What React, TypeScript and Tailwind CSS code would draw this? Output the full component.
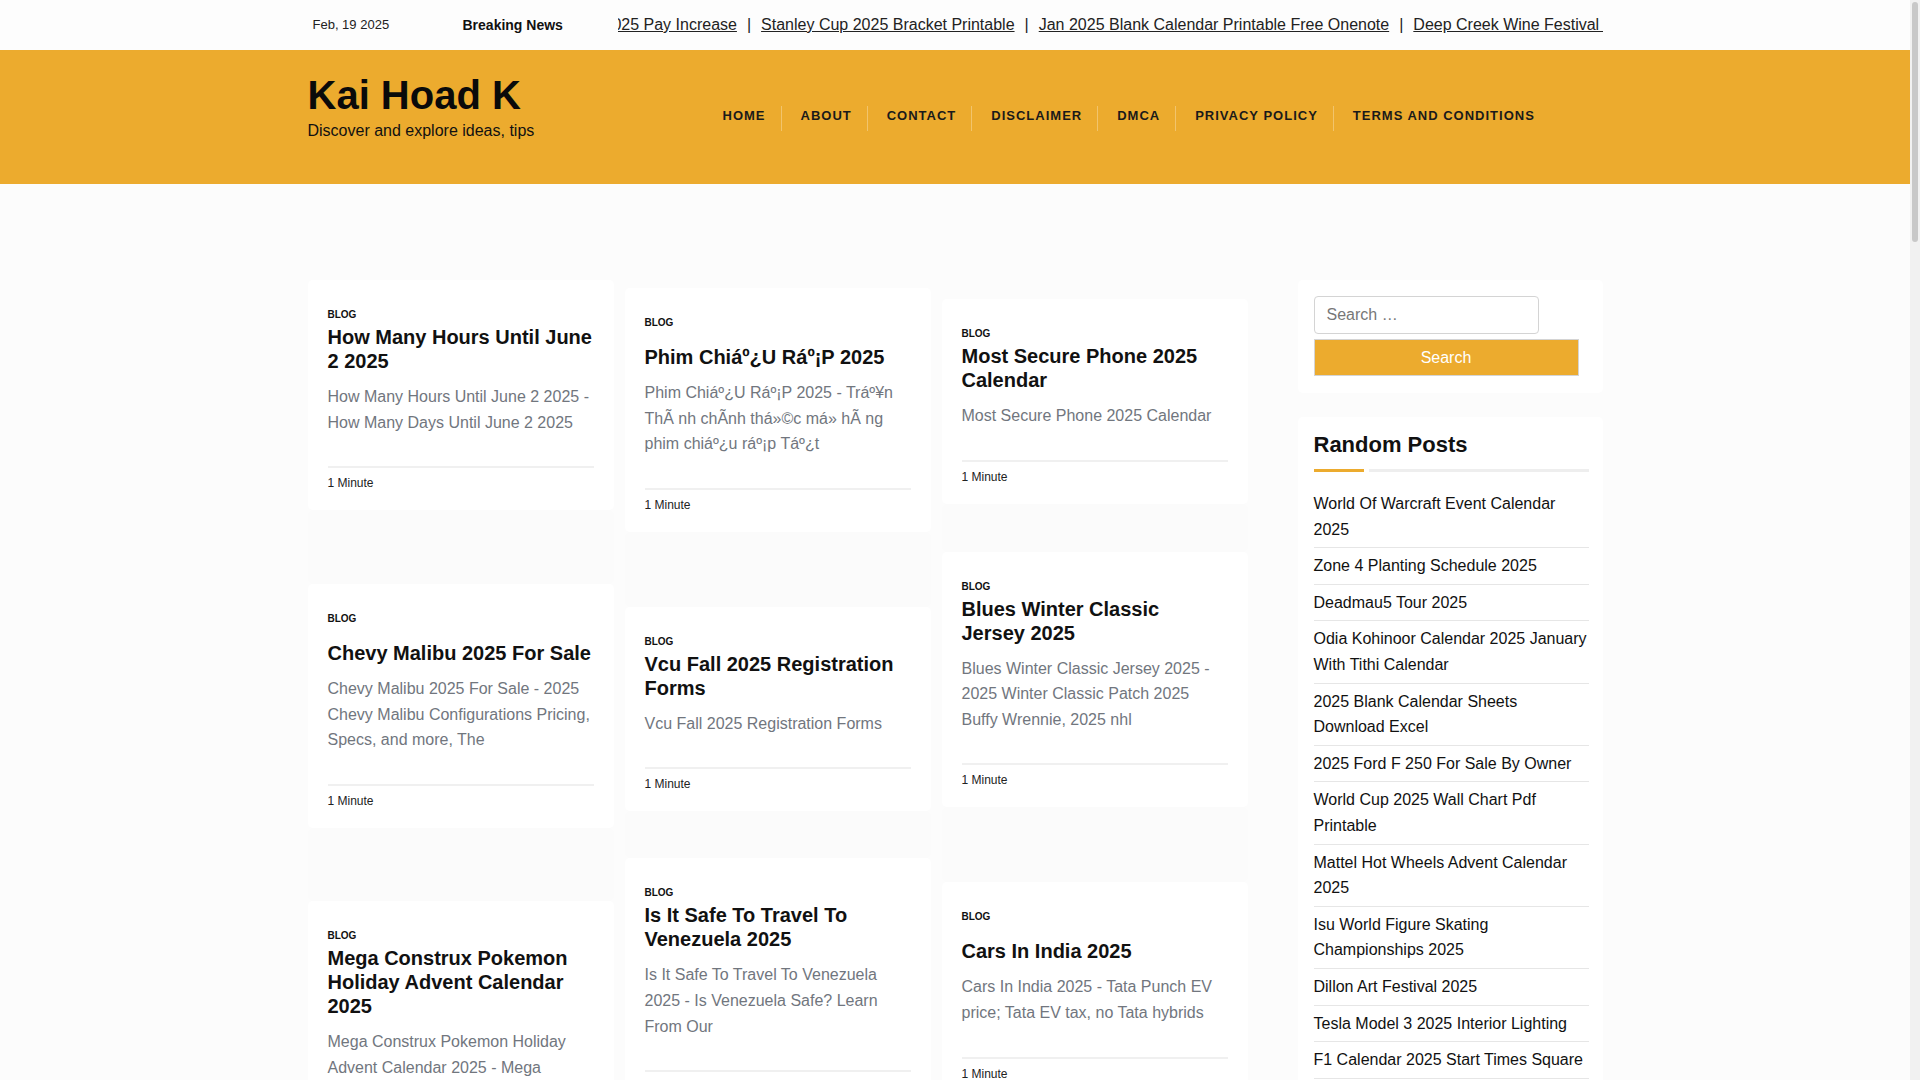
import React from "react";

type Post = { title: string; excerpt: string; single?: boolean; gap: number };

const columns: Post[][] = [
  [
    {
      title: "How Many Hours Until June 2 2025",
      excerpt: "How Many Hours Until June 2 2025 - How Many Days Until June 2 2025",
      gap: 0,
    },
    {
      title: "Chevy Malibu 2025 For Sale",
      excerpt:
        "Chevy Malibu 2025 For Sale - 2025 Chevy Malibu Configurations Pricing, Specs, and more, The",
      single: true,
      gap: 74,
    },
    {
      title: "Mega Construx Pokemon Holiday Advent Calendar 2025",
      excerpt:
        "Mega Construx Pokemon Holiday Advent Calendar 2025 - Mega Construx Pokemon Advent Calendar",
      gap: 73,
    },
  ],
  [
    {
      title: "Phim Chiáº¿U Ráº¡P 2025",
      excerpt:
        "Phim Chiáº¿U Ráº¡P 2025 - Tráº¥n ThÃ nh chÃnh thá»©c má» hÃ ng phim chiáº¿u ráº¡p Táº¿t",
      single: true,
      gap: 0,
    },
    {
      title: "Vcu Fall 2025 Registration Forms",
      excerpt: "Vcu Fall 2025 Registration Forms",
      gap: 75,
    },
    {
      title: "Is It Safe To Travel To Venezuela 2025",
      excerpt: "Is It Safe To Travel To Venezuela 2025 - Is Venezuela Safe? Learn From Our",
      gap: 47,
    },
  ],
  [
    {
      title: "Most Secure Phone 2025 Calendar",
      excerpt: "Most Secure Phone 2025 Calendar",
      gap: 0,
    },
    {
      title: "Blues Winter Classic Jersey 2025",
      excerpt:
        "Blues Winter Classic Jersey 2025 - 2025 Winter Classic Patch 2025 Buffy Wrennie, 2025 nhl",
      gap: 48,
    },
    {
      title: "Cars In India 2025",
      excerpt: "Cars In India 2025 - Tata Punch EV price; Tata EV tax, no Tata hybrids",
      single: true,
      gap: 75,
    },
  ],
];

const colTop = ["pt-[96px]", "pt-[104px]", "pt-[115px]"];

const nav = ["HOME", "ABOUT", "CONTACT", "DISCLAIMER", "DMCA", "PRIVACY POLICY", "TERMS AND CONDITIONS"];

const ticker = [
  "2025 Pay Increase",
  "Stanley Cup 2025 Bracket Printable",
  "Jan 2025 Blank Calendar Printable Free Onenote",
  "Deep Creek Wine Festival 2025",
  "Free Printable 2025 Calendar",
];

const randomPosts = [
  "World Of Warcraft Event Calendar 2025",
  "Zone 4 Planting Schedule 2025",
  "Deadmau5 Tour 2025",
  "Odia Kohinoor Calendar 2025 January With Tithi Calendar",
  "2025 Blank Calendar Sheets Download Excel",
  "2025 Ford F 250 For Sale By Owner",
  "World Cup 2025 Wall Chart Pdf Printable",
  "Mattel Hot Wheels Advent Calendar 2025",
  "Isu World Figure Skating Championships 2025",
  "Dillon Art Festival 2025",
  "Tesla Model 3 2025 Interior Lighting",
  "F1 Calendar 2025 Start Times Square",
];

function Card({ post }: { post: Post }) {
  return (
    <div className="bg-white rounded-[5px] px-[20px] pt-[27px] pb-[18px]">
      <div className="text-[10px] leading-[15px] font-bold text-[#111]">BLOG</div>
      <h2
        className={
          (post.single ? "mt-[15px] " : "mt-[3px] ") +
          "text-[20px] leading-[24px] font-bold text-[#111]"
        }
      >
        {post.title}
      </h2>
      <p className="mt-[11px] text-[16px] leading-[25.6px] text-[#71767e]">{post.excerpt}</p>
      <div className="mt-[31px] h-[2px] bg-[#f0f0f0]" />
      <div className="pt-[6px] text-[12px] leading-[18px] text-[#222]">1 Minute</div>
    </div>
  );
}

export default function App() {
  return (
    <div className="flex w-screen h-screen overflow-hidden font-['Liberation_Sans',Arial,sans-serif] bg-[#fcfcfc]">
      <div className="flex-1 min-w-0 overflow-hidden flex flex-col">
        {/* Top bar */}
        <div className="bg-[#fdfdfd] h-[50px] shrink-0">
          <div className="w-[1295px] mx-auto h-full flex items-center text-[#222]">
            <div className="w-[155px] pl-[5px] text-[13px]">Feb, 19 2025</div>
            <div className="w-[155px] text-[14px] font-bold text-[#111]">Breaking News</div>
            <div className="flex-1 min-w-0 overflow-hidden">
              <div className="flex whitespace-nowrap ml-[-14px] text-[16px]">
                {ticker.map((t, i) => (
                  <React.Fragment key={t}>
                    {i > 0 && <span className="px-[10px]">|</span>}
                    <a className="underline text-[#222]">{t}</a>
                  </React.Fragment>
                ))}
              </div>
            </div>
          </div>
        </div>

        {/* Header */}
        <div className="bg-[#ecab2e] h-[134px] shrink-0">
          <div className="w-[1295px] mx-auto flex items-start pt-[21px]">
            <div className="w-[395px] shrink-0">
              <div className="text-[40px] leading-[48px] font-bold text-[#0a0a0a]">Kai Hoad K</div>
              <div className="text-[16px] leading-[24px] text-[#111]">Discover and explore ideas, tips</div>
            </div>
            <nav className="flex mt-[35px]">
              {nav.map((n, i) => (
                <div
                  key={n}
                  className={
                    (i > 0 ? "border-l border-[#f2c46c] " : "border-l border-transparent ") +
                    "pl-[19px] pr-[15px] pt-[2px] pb-[7px] text-[13px] leading-[16px] font-bold tracking-[1px] text-[#1a1a1a] whitespace-nowrap"
                  }
                >
                  {n}
                </div>
              ))}
            </nav>
          </div>
        </div>

        {/* Main */}
        <div className="flex-1 bg-[#fcfcfc]">
          <div className="w-[1295px] mx-auto flex items-start">
            <div className="w-[940px] flex gap-[11px] items-start">
              {columns.map((col, ci) => (
                <div key={ci} className={"w-[306px] flex flex-col " + colTop[ci]}>
                  {col.map((p) => (
                    <React.Fragment key={p.title}>
                      {p.gap > 0 && (
                        <div className="bg-[#fbfbfb] rounded-[5px]" style={{ height: p.gap }} />
                      )}
                      <Card post={p} />
                    </React.Fragment>
                  ))}
                </div>
              ))}
            </div>

            {/* Sidebar */}
            <aside className="w-[305px] ml-[50px] pt-[96px] flex flex-col">
              <div className="bg-white rounded-[5px] pl-[16px] pr-[14px] pt-[16px] pb-[17px]">
                <div className="w-[225px] h-[38px] border border-[#d4d4d4] rounded-[4px] bg-white flex items-center pl-[12px] text-[16px] text-[#777]">
                  Search …
                </div>
                <div className="mt-[5px] w-[265px] h-[37px] bg-[#ecab2e] border border-[#d4d4d4] flex items-center justify-center text-[16px] text-white">
                  Search
                </div>
              </div>

              <div className="mt-[24px] bg-white rounded-[5px] pl-[16px] pr-[14px] pt-[15px] pb-[16px]">
                <h3 className="text-[22px] leading-[26px] font-bold text-[#111]">Random Posts</h3>
                <div className="mt-[11px] flex">
                  <div className="w-[50px] h-[3px] bg-[#ecab2e]" />
                  <div className="flex-1 h-[3px] ml-[5px] bg-[#eeeeee]" />
                </div>
                <ul className="mt-[14px]">
                  {randomPosts.map((r) => (
                    <li
                      key={r}
                      className="py-[5px] border-b border-[#e6e6e6] text-[16px] leading-[25.6px] text-[#111]"
                    >
                      {r}
                    </li>
                  ))}
                </ul>
              </div>
            </aside>
          </div>
        </div>
      </div>

      {/* scrollbar */}
      <div className="w-[10px] shrink-0 bg-[#f1f1f1] flex flex-col pt-[2px] px-[2px]">
        <div className="h-[240px] rounded-[3px] bg-[#c8c8c8]" />
      </div>
    </div>
  );
}
